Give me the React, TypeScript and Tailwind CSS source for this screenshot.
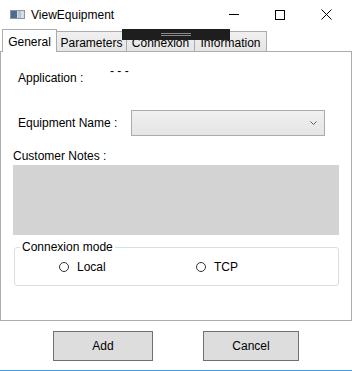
import React from "react";

const font = { fontFamily: '"Liberation Sans", Arial, sans-serif' };

function Radio({ label }: { label: string }) {
  return (
    <div className="flex items-center gap-[8px]">
      <div className="w-[10px] h-[10px] rounded-full border border-[#333333] bg-white" />
      <span>{label}</span>
    </div>
  );
}

export default function App() {
  return (
    <div
      className="relative w-[352px] h-[371px] bg-white text-[12px] leading-[16px] text-black overflow-hidden"
      style={font}
    >
      {/* title bar */}
      <div className="h-[29px] flex items-center">
        <svg className="ml-[10px]" width="15" height="9" viewBox="0 0 15 9">
          <rect x="0.5" y="0.5" width="14" height="8" fill="#d8dde3" stroke="#8c96a0" />
          <rect x="1" y="1" width="6" height="7" fill="#4b6b8f" />
          <rect x="8" y="1" width="3" height="7" fill="#b8c4d0" />
        </svg>
        <span className="ml-[6px]">ViewEquipment</span>
        <div className="ml-auto flex items-center h-full">
          <div className="w-[46px] h-full flex items-center justify-center">
            <div className="w-[10px] h-px bg-black" />
          </div>
          <div className="w-[46px] h-full flex items-center justify-center">
            <div className="w-[10px] h-[10px] border border-black" />
          </div>
          <div className="w-[46px] h-full flex items-center justify-center mr-[3px]">
            <svg width="11" height="11" viewBox="0 0 11 11">
              <path d="M0.5 0.5 L10.5 10.5 M10.5 0.5 L0.5 10.5" stroke="#000" strokeWidth="1" />
            </svg>
          </div>
        </div>
      </div>

      {/* tab headers */}
      <div className="h-[22px] flex items-end pl-[2px]">
        <div className="relative z-10 -mb-px h-[23px] w-[55px] border border-b-0 border-[#acacac] bg-white flex items-center justify-center pt-[1px]">
          General
        </div>
        <div className="h-[20px] w-[71px] -ml-px border border-b-0 border-[#acacac] bg-gradient-to-b from-[#f0f0f0] to-[#e5e5e5] flex items-center justify-center pt-[2px]">
          Parameters
        </div>
        <div className="h-[20px] w-[69px] -ml-px border border-b-0 border-[#acacac] bg-gradient-to-b from-[#f0f0f0] to-[#e5e5e5] flex items-center justify-center pt-[2px]">
          Connexion
        </div>
        <div className="h-[20px] w-[73px] -ml-px border border-b-0 border-[#acacac] bg-gradient-to-b from-[#f0f0f0] to-[#e5e5e5] flex items-center justify-center pt-[2px]">
          Information
        </div>
      </div>

      {/* tab panel */}
      <div className="h-[270px] w-[352px] border border-[#acacac] bg-white">
        <div className="flex items-start mt-[18px] ml-[17px]">
          <span className="w-[92px]">Application :</span>
          <span className="-mt-[7px]">- - -</span>
        </div>
        <div className="flex items-center h-[26px] mt-[24px] ml-[17px]">
          <span className="w-[113px]">Equipment Name :</span>
          <div className="w-[194px] h-[26px] border border-[#acacac] bg-gradient-to-b from-[#f0f0f0] to-[#e5e5e5] flex items-center justify-end pr-[7px]">
            <svg width="7" height="4" viewBox="0 0 7 4">
              <path d="M0.5 0.5 L3.5 3.5 L6.5 0.5" stroke="#606060" fill="none" strokeWidth="1" />
            </svg>
          </div>
        </div>
        <div className="mt-[12px] ml-[12px]">Customer Notes :</div>
        <div className="mt-px ml-[12px] w-[326px] h-[70px] bg-[#d3d3d3]" />
        <fieldset className="mt-[4px] ml-[13px] w-[325px] h-[47px] border border-[#d5dfe5] rounded-[3px]">
          <legend className="ml-[5px] px-[2px]">Connexion mode</legend>
          <div className="flex items-center h-[16px] mt-[4px] ml-[44px]">
            <div className="w-[137px]">
              <Radio label="Local" />
            </div>
            <Radio label="TCP" />
          </div>
        </fieldset>
      </div>

      {/* buttons */}
      <div className="flex mt-[10px]">
        <button className="ml-[53px] w-[100px] h-[30px] border border-[#707070] bg-[#dddddd]">Add</button>
        <button className="ml-[50px] w-[96px] h-[30px] border border-[#707070] bg-[#dddddd]">Cancel</button>
      </div>

      <div className="absolute left-0 right-0 top-[370px] h-px bg-[#4a9ee6]" />

      {/* dark overlay */}
      <div className="absolute left-[122px] top-[29px] w-[108px] h-[11px] bg-[#1e1e1e] z-20">
        <div className="absolute left-[39px] top-[4px] w-[30px] h-px bg-[#8a8a8a]" />
        <div className="absolute left-[39px] top-[6px] w-[30px] h-px bg-[#8a8a8a]" />
      </div>
    </div>
  );
}
